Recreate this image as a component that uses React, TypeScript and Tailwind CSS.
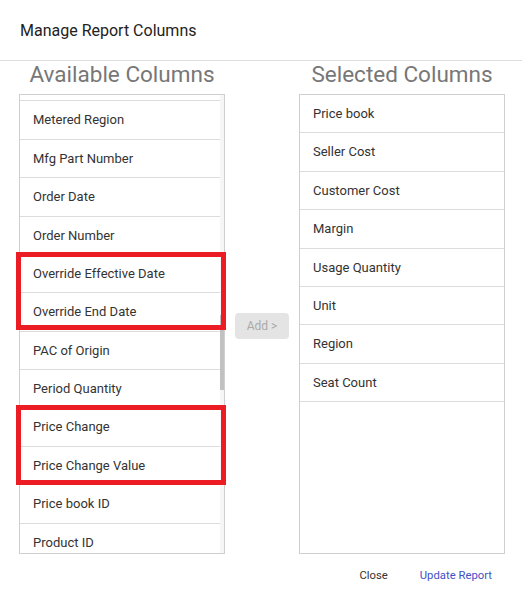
import React from 'react';

const available = [
  'Metered Region',
  'Mfg Part Number',
  'Order Date',
  'Order Number',
  'Override Effective Date',
  'Override End Date',
  'PAC of Origin',
  'Period Quantity',
  'Price Change',
  'Price Change Value',
  'Price book ID',
  'Product ID',
];

const selected = [
  'Price book',
  'Seller Cost',
  'Customer Cost',
  'Margin',
  'Usage Quantity',
  'Unit',
  'Region',
  'Seat Count',
];

const Row: React.FC<{ label: string }> = ({ label }) => (
  <div className="h-[38.4px] shrink-0 border-b border-[#dcdcdc] pl-[13px] flex items-center text-[13px] text-[#333]">
    {label}
  </div>
);

export default function App() {
  return (
    <div
      className="relative w-[522px] h-[596px] bg-white overflow-hidden"
      style={{ fontFamily: 'Roboto, "Liberation Sans", sans-serif' }}
    >
      {/* header */}
      <div className="h-[61px] border-b border-[#dedede] pl-[20px] flex items-center">
        <h2 className="text-[16px] text-[#222] pt-[1px]">Manage Report Columns</h2>
      </div>

      {/* column titles */}
      <div className="flex pl-[19px] h-[33px]">
        <div className="w-[206px] text-center text-[22.5px] leading-[26px] text-[#777] whitespace-nowrap">
          Available Columns
        </div>
        <div className="w-[74px]" />
        <div className="w-[206px] text-center text-[22.5px] leading-[26px] text-[#777] whitespace-nowrap">
          Selected Columns
        </div>
      </div>

      {/* lists */}
      <div className="flex pl-[19px] h-[460px]">
        <div className="w-[206px] h-full border border-[#cfcfcf] flex overflow-hidden">
          <div className="flex-1 overflow-hidden">
            {/* list is scrolled: only the bottom edge of the previous row shows */}
            <div className="h-[6.4px] border-b border-[#dcdcdc]" />
            {available.map(label => (
              <Row key={label} label={label} />
            ))}
          </div>
          <div className="relative w-[4px] bg-[#f6f6f6]">
            <div className="absolute left-0 w-[4px] top-[220px] h-[75px] bg-[#c1c1c1]" />
          </div>
        </div>

        <div className="w-[74px] flex items-center justify-center pt-[4px]">
          <button
            type="button"
            disabled
            className="w-[54px] h-[26px] rounded-[4px] bg-[#e4e4e4] text-[12px] text-[#aaa]"
          >
            Add &gt;
          </button>
        </div>

        <div className="w-[206px] h-full border border-[#cfcfcf] flex flex-col overflow-hidden">
          {selected.map(label => (
            <Row key={label} label={label} />
          ))}
        </div>
      </div>

      {/* footer */}
      <div className="flex justify-end items-center gap-[32px] pr-[30px] h-[45px] text-[11.3px]">
        <button type="button" className="text-[#333]">Close</button>
        <button type="button" className="text-[#3f51c4]">Update Report</button>
      </div>

      {/* highlight annotations */}
      <div className="absolute left-[16px] top-[252px] w-[210px] h-[78px] border-[5px] border-[#ec1c24]" />
      <div className="absolute left-[16px] top-[405px] w-[210px] h-[80px] border-[5px] border-[#ec1c24]" />
    </div>
  );
}
